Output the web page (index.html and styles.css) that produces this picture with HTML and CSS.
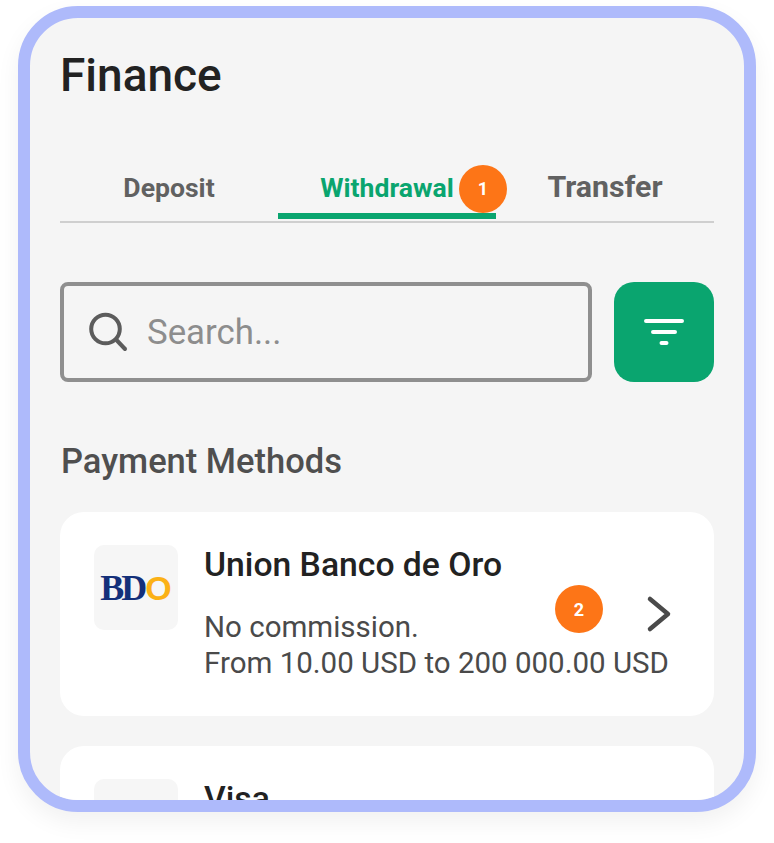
FILE: index.html
```html
<!DOCTYPE html>
<html lang="en">
<head>
<meta charset="utf-8">
<title>Finance</title>
<link rel="stylesheet" href="styles.css">
</head>
<body>
<main class="phone">
  <h1 class="title">Finance</h1>
  <nav class="tabs">
    <div class="tab">Deposit</div>
    <div class="tab tab-active">Withdrawal<span class="badge badge-one">1</span></div>
    <div class="tab tab-large">Transfer</div>
  </nav>
  <div class="search-row">
    <div class="search">
      <svg class="search-icon" width="40" height="40" viewBox="0 0 40 40" fill="none"><circle cx="16.500" cy="17" r="14.300" stroke="#5c5c5c" stroke-width="4"/><path d="M27 27.500l9 9.500" stroke="#5c5c5c" stroke-width="4" stroke-linecap="round"/></svg>
      <span class="placeholder">Search...</span>
    </div>
    <button class="filter" type="button" aria-label="Filter">
      <svg width="40" height="28" viewBox="0 0 40 28" fill="none"><path d="M2 3h36M9 14h22M17.500 25h5" stroke="#fff" stroke-width="4" stroke-linecap="round"/></svg>
    </button>
  </div>
  <h2 class="section">Payment Methods</h2>
  <section class="card">
    <div class="logo"><span class="bdo">BD<span class="bdo-o">O</span></span></div>
    <div class="info">
      <div class="name">Union Banco de Oro</div>
      <div class="desc">No commission.<br>From 10.00 USD to 200 000.00 USD</div>
    </div>
    <span class="badge badge-two">2</span>
    <svg class="chevron" width="26" height="38" viewBox="0 0 26 38" fill="none"><path d="M4 4l18 15L4 34" stroke="#4a4a4a" stroke-width="4.500" stroke-linecap="round" stroke-linejoin="round"/></svg>
  </section>
  <section class="card">
    <div class="logo"></div>
    <div class="info"><div class="name">Visa</div></div>
  </section>
</main>
</body>
</html>
```
FILE: styles.css
```css
* { box-sizing: border-box; }
html, body { margin: 0; background: #fff; }
body { padding: 6px 18px 0; height: 843px; overflow: hidden; font-family: Roboto, "Liberation Sans", sans-serif; }
.phone {
  width: 738px; height: 806px; border: 12px solid #aebafb; border-radius: 60px;
  background: #f5f5f5; padding: 29px 30px 0; overflow: hidden;
  box-shadow: 0 10px 24px rgba(0,0,0,.06);
}
.title { margin: 0; font-size: 46px; line-height: 56px; font-weight: 500; color: #222; }
.tabs { display: flex; height: 63px; margin-top: 57px; border-bottom: 2px solid #cfcfcf; }
.tab {
  position: relative; flex: 1; height: 63px; padding-top: 10px; text-align: center;
  font-size: 26.600px; line-height: 36px; font-weight: 700; color: #616161;
}
.tab-large { font-size: 30.300px; padding-top: 9px; }
.tab-active { color: #0aa56f; border-bottom: 6px solid #0aa56f; margin-bottom: -2px; height: 59px; }
.badge {
  position: absolute; display: flex; align-items: center; justify-content: center;
  width: 48px; height: 48px; border-radius: 50%; background: #fd7517; color: #fff;
  font-size: 18px; font-weight: 700;
}
.badge-one { left: 181px; top: 5px; }
.badge-two { left: 495px; top: 73px; }
.search-row { display: flex; gap: 22px; margin-top: 59px; }
.search {
  flex: 1; height: 100px; display: flex; align-items: center; gap: 18px; padding-left: 25px;
  border: 4px solid #8f8f8f; border-radius: 8px;
}
.search-icon { flex: none; }
.placeholder { font-size: 34.800px; color: #8d8d8d; }
.filter {
  width: 100px; height: 100px; border: 0; padding: 0; border-radius: 20px; background: #0aa56f;
  display: flex; align-items: center; justify-content: center;
}
.section { margin: 59px 0 0; padding-left: 1px; font-size: 34.500px; line-height: 40px; font-weight: 500; color: #4f4f4f; }
.card {
  position: relative; display: flex; gap: 26px; height: 204px; margin-top: 31px; padding: 33px 34px 0;
  background: #fff; border-radius: 24px;
}
.card + .card { margin-top: 30px; }
.logo {
  flex: none; width: 84px; height: 85px; border-radius: 10px; background: #f6f6f6;
  display: flex; align-items: center; justify-content: center;
}
.bdo { font-family: "Liberation Serif", serif; font-weight: 700; font-size: 36px; letter-spacing: -3px; color: #14307a; }
.bdo-o { font-family: "Liberation Sans", sans-serif; font-size: 34px; letter-spacing: 0; margin-left: 1px; color: #fbb116; }
.info { min-width: 0; }
.name { font-size: 33.700px; line-height: 40px; font-weight: 500; color: #222; }
.desc { margin-top: 24px; font-size: 29.500px; line-height: 36px; color: #4a4a4a; white-space: nowrap; }
.chevron { position: absolute; left: 586px; top: 83px; }
```
